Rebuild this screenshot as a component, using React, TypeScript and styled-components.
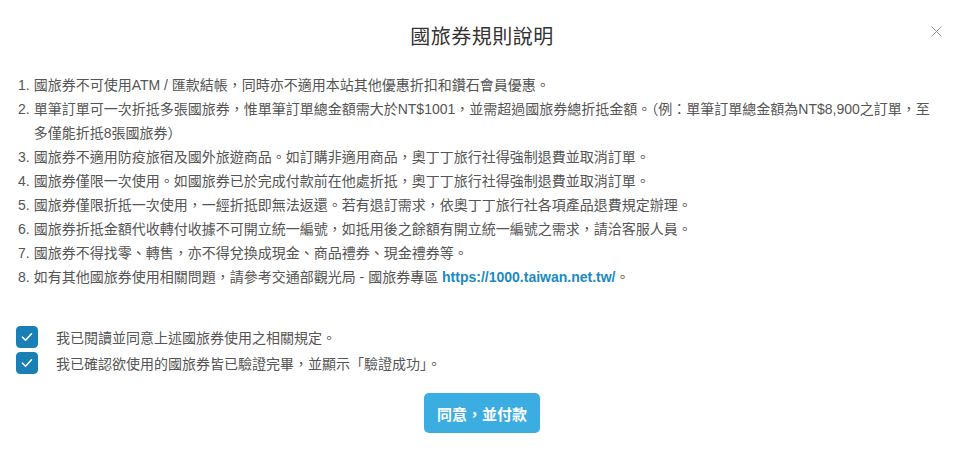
import React, { useState } from "react";
import styled, { createGlobalStyle } from "styled-components";

const GlobalStyle = createGlobalStyle`
  html, body {
    margin: 0;
    padding: 0;
    background: #fff;
  }
  body {
    font-family: "Liberation Sans", "Noto Sans CJK TC", sans-serif;
    color: #555;
  }
`;

const Modal = styled.div`
  width: 964px;
  height: 452px;
  box-sizing: border-box;
  padding: 18px 18px 0 18px;
  display: flex;
  flex-direction: column;
`;

const Header = styled.div`
  position: relative;
  display: flex;
  justify-content: center;
  align-items: center;
  height: 34px;
`;

const Title = styled.h2`
  margin: 0;
  font-size: 20px;
  font-weight: 400;
  color: #333;
  letter-spacing: 0.5px;
`;

const CloseButton = styled.button`
  position: absolute;
  right: 4px;
  top: 8px;
  border: none;
  background: transparent;
  padding: 0;
  cursor: pointer;
  display: flex;
`;

const RuleList = styled.ol`
  list-style: none;
  margin: 21px 0 0 0;
  padding: 0;
  font-size: 14px;
  line-height: 24px;
  color: #555;
`;

const RuleItem = styled.li`
  display: flex;
  padding-right: 10px;
`;

const Num = styled.span`
  flex: 0 0 auto;
  margin-right: 4px;
`;

const Link = styled.a`
  color: #1a8ac6;
  font-weight: 700;
  text-decoration: none;
`;

const Agreements = styled.div`
  margin-top: 37px;
  display: flex;
  flex-direction: column;
  gap: 4px;
`;

const CheckRow = styled.label`
  display: flex;
  align-items: center;
  cursor: pointer;
`;

const Box = styled.span<{ $on: boolean }>`
  width: 22px;
  height: 22px;
  margin-left: -2px;
  border-radius: 4px;
  box-sizing: border-box;
  display: flex;
  align-items: center;
  justify-content: center;
  background: ${(p) => (p.$on ? "#1a7fb4" : "#fff")};
  border: 1px solid ${(p) => (p.$on ? "#1a7fb4" : "#ccc")};
`;

const CheckLabel = styled.span`
  margin-left: 18px;
  font-size: 14px;
  color: #555;
`;

const Footer = styled.div`
  display: flex;
  justify-content: center;
  margin-top: 19px;
`;

const PayButton = styled.button`
  width: 116px;
  height: 40px;
  border: none;
  border-radius: 5px;
  background: #3cade0;
  color: #fff;
  font-family: "Liberation Sans", "Noto Sans CJK TC", sans-serif;
  font-size: 15px;
  font-weight: 700;
  cursor: pointer;
`;

const rules: React.ReactNode[] = [
  "國旅券不可使用ATM / 匯款結帳，同時亦不適用本站其他優惠折扣和鑽石會員優惠。",
  "單筆訂單可一次折抵多張國旅券，惟單筆訂單總金額需大於NT$1001，並需超過國旅券總折抵金額。（例：單筆訂單總金額為NT$8,900之訂單，至多僅能折抵8張國旅券）",
  "國旅券不適用防疫旅宿及國外旅遊商品。如訂購非適用商品，奧丁丁旅行社得強制退費並取消訂單。",
  "國旅券僅限一次使用。如國旅券已於完成付款前在他處折抵，奧丁丁旅行社得強制退費並取消訂單。",
  "國旅券僅限折抵一次使用，一經折抵即無法返還。若有退訂需求，依奧丁丁旅行社各項產品退費規定辦理。",
  "國旅券折抵金額代收轉付收據不可開立統一編號，如抵用後之餘額有開立統一編號之需求，請洽客服人員。",
  "國旅券不得找零、轉售，亦不得兌換成現金、商品禮券、現金禮券等。",
  <>
    如有其他國旅券使用相關問題，請參考交通部觀光局 - 國旅券專區{" "}
    <Link href="#">https://1000.taiwan.net.tw/</Link>。
  </>,
];

const agreements = [
  "我已閱讀並同意上述國旅券使用之相關規定。",
  "我已確認欲使用的國旅券皆已驗證完畢，並顯示「驗證成功」。",
];

const App: React.FC = () => {
  const [checked, setChecked] = useState([true, true]);

  const toggle = (i: number) => {
    setChecked((prev) => prev.map((v, idx) => (idx === i ? !v : v)));
  };

  return (
    <>
      <GlobalStyle />
      <Modal>
        <Header>
          <Title>國旅券規則說明</Title>
          <CloseButton aria-label="close">
            <svg width="11" height="11" viewBox="0 0 11 11">
              <path d="M0.5 0.5 L10.5 10.5 M10.5 0.5 L0.5 10.5" stroke="#999" strokeWidth="1" />
            </svg>
          </CloseButton>
        </Header>
        <RuleList>
          {rules.map((r, i) => (
            <RuleItem key={i}>
              <Num>{i + 1}.</Num>
              <span>{r}</span>
            </RuleItem>
          ))}
        </RuleList>
        <Agreements>
          {agreements.map((a, i) => (
            <CheckRow key={i} onClick={() => toggle(i)}>
              <Box $on={checked[i]}>
                {checked[i] && (
                  <svg width="12" height="10" viewBox="0 0 12 10">
                    <path d="M1.5 5.2 L4.6 8.2 L10.5 1.8" fill="none" stroke="#fff" strokeWidth="1.6" strokeLinecap="round" strokeLinejoin="round" />
                  </svg>
                )}
              </Box>
              <CheckLabel>{a}</CheckLabel>
            </CheckRow>
          ))}
        </Agreements>
        <Footer>
          <PayButton disabled={!checked.every(Boolean)}>同意，並付款</PayButton>
        </Footer>
      </Modal>
    </>
  );
};

export default App;
